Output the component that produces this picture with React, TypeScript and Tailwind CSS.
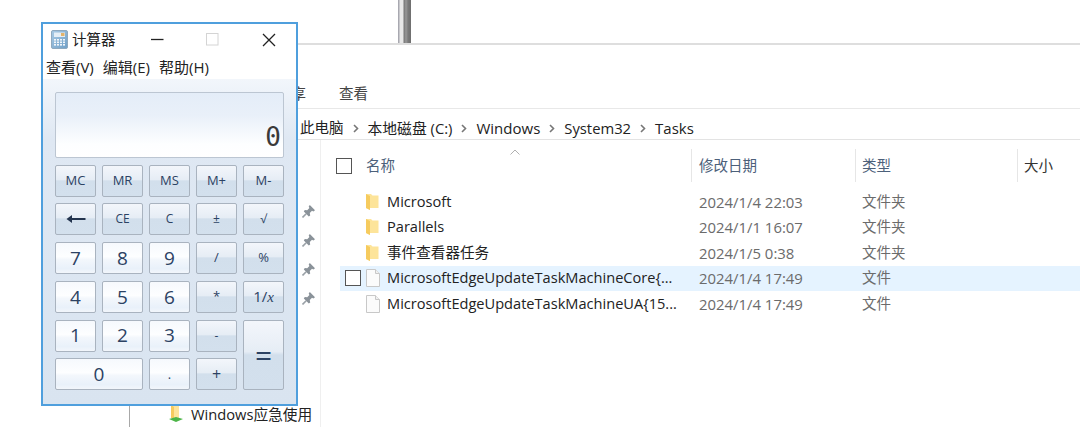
const fnBtn =
  "bg-[linear-gradient(180deg,#f3f6fb_0%,#e6edf5_45%,#d2dfec_50%,#d3e0ed_100%)]";
const numBtn =
  "bg-[linear-gradient(180deg,#f6f9fd_0%,#fdfeff_45%,#f3f7fc_55%,#e9f1fa_85%,#f2f6fb_100%)]";

type Key = { label: React.ReactNode; kind: "fn" | "num"; size: string };

function ArrowGlyph() {
  return (
    <svg width="20" height="10" viewBox="0 0 20 10">
      <path d="M0.5 5 L6 1 V4 H19.5 V6 H6 V9 Z" fill="#23344e" />
    </svg>
  );
}

const keys: Key[] = [
  { label: "MC", kind: "fn", size: "text-[13px]" },
  { label: "MR", kind: "fn", size: "text-[13px]" },
  { label: "MS", kind: "fn", size: "text-[13px]" },
  { label: "M+", kind: "fn", size: "text-[13px]" },
  { label: "M-", kind: "fn", size: "text-[13px]" },
  { label: <ArrowGlyph />, kind: "fn", size: "text-[13px]" },
  { label: "CE", kind: "fn", size: "text-[12px]" },
  { label: "C", kind: "fn", size: "text-[12px]" },
  { label: "±", kind: "fn", size: "text-[12px]" },
  { label: "√", kind: "fn", size: "text-[12px]" },
  { label: "7", kind: "num", size: "text-[19px]" },
  { label: "8", kind: "num", size: "text-[19px]" },
  { label: "9", kind: "num", size: "text-[19px]" },
  { label: "/", kind: "fn", size: "text-[13px]" },
  { label: "%", kind: "fn", size: "text-[13px]" },
  { label: "4", kind: "num", size: "text-[19px]" },
  { label: "5", kind: "num", size: "text-[19px]" },
  { label: "6", kind: "num", size: "text-[19px]" },
  { label: "*", kind: "fn", size: "text-[13px]" },
  {
    label: (
      <span>
        1/<i className="font-['Liberation_Serif',serif]">x</i>
      </span>
    ),
    kind: "fn",
    size: "text-[15px]",
  },
  { label: "1", kind: "num", size: "text-[19px]" },
  { label: "2", kind: "num", size: "text-[19px]" },
  { label: "3", kind: "num", size: "text-[19px]" },
  { label: "-", kind: "fn", size: "text-[12px]" },
  { label: "=", kind: "fn", size: "text-[30px] row-span-2" },
  { label: "0", kind: "num", size: "text-[19px] col-span-2" },
  { label: ".", kind: "num", size: "text-[13px]" },
  { label: "+", kind: "fn", size: "text-[16px]" },
];

function CalcIcon() {
  return (
    <svg width="17" height="19" viewBox="0 0 17 19">
      <defs>
        <linearGradient id="calcBody" x1="0" y1="0" x2="1" y2="1">
          <stop offset="0" stopColor="#a9cbe6" />
          <stop offset="1" stopColor="#6f9fc6" />
        </linearGradient>
      </defs>
      <rect x="0.5" y="0.5" width="16" height="18" rx="1.5" fill="url(#calcBody)" stroke="#8fa9bf" />
      <rect x="3" y="2.5" width="11" height="4.5" fill="#e4eef6" />
      <rect x="10" y="3" width="3.5" height="3" fill="#e2b36b" />
      {[9, 11.5, 14].map((y) =>
        [3, 6, 9, 12].map((x) => (
          <rect key={`${x}-${y}`} x={x} y={y} width="2" height="1.6" fill="#f2f6fa" />
        ))
      )}
    </svg>
  );
}

function Calculator() {
  return (
    <div className="absolute left-[41px] top-[22px] flex h-[384px] w-[257px] flex-col border-2 border-[#4f9fdd] bg-white">
      {/* title bar */}
      <div className="flex h-[32px] shrink-0 items-center pb-[1px] text-[#222]">
        <div className="ml-[8px] mr-[4px]">
          <CalcIcon />
        </div>
        <span className="text-[14.5px]">计算器</span>
        <svg className="ml-[35px]" width="13" height="13" viewBox="0 0 13 13">
          <path d="M0 6.5 H12.5" stroke="#222" strokeWidth="1.3" />
        </svg>
        <svg className="ml-[42px]" width="13" height="13" viewBox="0 0 13 13">
          <rect x="0.5" y="0.5" width="11.5" height="11.5" fill="none" stroke="#d4d4d4" />
        </svg>
        <svg className="ml-[43px]" width="14" height="14" viewBox="0 0 14 14">
          <path d="M1 1 L13 13 M13 1 L1 13" stroke="#222" strokeWidth="1.3" />
        </svg>
      </div>

      {/* menu bar */}
      <div className="flex h-[23px] shrink-0 items-center gap-x-[9px] pl-[3px] text-[15px] text-[#222]">
        <span>查看(V)</span>
        <span>编辑(E)</span>
        <span>帮助(H)</span>
      </div>

      {/* calculator body */}
      <div className="flex-1 bg-[linear-gradient(180deg,#f2f6fb_0px,#dfe8f3_60px,#d9e4f0_100%)] px-[12px] pt-[13px]">
        <div className="flex h-[66px] items-end justify-end rounded-[2px] border border-[#bcc6d2] bg-[linear-gradient(180deg,#e4edf8_0%,#e9f0f9_35%,#fdfeff_80%,#ffffff_100%)] pb-[4px] pr-[2px]">
          <span className="font-['DejaVu_Sans_Mono',monospace] text-[26px] leading-[32px] text-[#3a3a3a]">0</span>
        </div>
        <div className="mt-[6.5px] grid grid-cols-[repeat(5,41px)] grid-rows-[repeat(6,32px)] gap-x-[6px] gap-y-[6.75px]">
          {keys.map((k, i) => (
            <div
              key={i}
              className={`flex items-center justify-center rounded-[2px] border border-[#a9b3bf] text-[#2c4263] ${
                k.kind === "fn" ? fnBtn : numBtn
              } ${k.size}`}
            >
              {k.label}
            </div>
          ))}
        </div>
      </div>
    </div>
  );
}

function FolderIcon() {
  return (
    <svg width="13" height="18" viewBox="0 0 13 18">
      <path d="M0 1 H5 L6.5 2.5 H12.5 V15 H4 V17 L0 15 Z" fill="#fde49a" />
      <path d="M0 1 L4 3 V17 L0 15 Z" fill="#f6cb5e" />
    </svg>
  );
}

function FileIcon() {
  return (
    <svg width="14" height="18" viewBox="0 0 14 18">
      <path d="M0.5 0.5 H9.5 L13.5 4.5 V17.5 H0.5 Z" fill="#fbfbfb" stroke="#c8c8c8" />
      <path d="M9.5 0.5 V4.5 H13.5" fill="#f0f0f0" stroke="#c8c8c8" />
    </svg>
  );
}

function PinIcon() {
  return (
    <svg width="13" height="13" viewBox="0 0 13 13">
      <path d="M7.8 0 L13 5.2 L11.4 6.4 L10 5.8 L7.8 8 L8.2 10.4 L6.8 11.4 L1.8 6.4 L2.8 5 L5.2 5.3 L7.4 3.1 L6.7 1.6 Z" fill="#8a9299" />
      <path d="M4.2 8.8 L0.5 12.5" stroke="#9aa1a7" strokeWidth="1.6" />
    </svg>
  );
}

function Checkbox() {
  return <div className="h-[16px] w-[16px] shrink-0 border-[1.5px] border-[#555] bg-white" />;
}

const rows = [
  { name: "Microsoft", date: "2024/1/4 22:03", type: "文件夹", icon: "folder" },
  { name: "Parallels", date: "2024/1/1 16:07", type: "文件夹", icon: "folder" },
  { name: "事件查看器任务", date: "2024/1/5 0:38", type: "文件夹", icon: "folder" },
  { name: "MicrosoftEdgeUpdateTaskMachineCore{...", date: "2024/1/4 17:49", type: "文件", icon: "file", hover: true },
  { name: "MicrosoftEdgeUpdateTaskMachineUA{15...", date: "2024/1/4 17:49", type: "文件", icon: "file" },
];

const crumbs = [
  { text: "此电脑", size: "text-[14.5px]" },
  { text: "本地磁盘 (C:)", size: "text-[14.8px]" },
  { text: "Windows", size: "text-[15px]" },
  { text: "System32", size: "text-[14.8px]" },
  { text: "Tasks", size: "text-[15px]" },
];

function FileList() {
  return (
    <div className="min-w-0 flex-1 border-l border-[#efefef]">
      {/* column headers */}
      <div className="relative flex h-[49px] pt-[9px] text-[14.5px] text-[#4c607a]">
        <svg className="absolute left-[189px] top-[9px]" width="10" height="6" viewBox="0 0 10 6">
          <path d="M0.5 5.5 L5 1 L9.5 5.5" fill="none" stroke="#b0b0b0" />
        </svg>
        <div className="flex h-[33px] w-[370px] shrink-0 items-center pl-[15px]">
          <Checkbox />
          <span className="ml-[14px]">名称</span>
        </div>
        <div className="flex h-[33px] w-[164px] shrink-0 items-center border-l border-[#e6e6e6] pl-[7px]">修改日期</div>
        <div className="flex h-[33px] w-[162px] shrink-0 items-center border-l border-[#e6e6e6] pl-[6px]">类型</div>
        <div className="flex h-[33px] flex-1 items-center border-l border-[#e6e6e6] pl-[6px] text-[#333]">大小</div>
      </div>

      {/* rows */}
      <div className="pl-[19px]">
        {rows.map((r) => (
          <div key={r.name} className={`flex h-[25.5px] items-center ${r.hover ? "bg-[#e5f3ff]" : ""}`}>
            <div className="flex w-[26px] shrink-0 justify-center">{r.hover && <Checkbox />}</div>
            <div className="flex w-[21px] shrink-0 justify-start">
              {r.icon === "folder" ? <FolderIcon /> : <FileIcon />}
            </div>
            <span className="w-[312px] shrink-0 truncate text-[14.6px] text-[#222]">{r.name}</span>
            <span className="w-[163px] shrink-0 text-[14.9px] text-[#6b6b6b]">{r.date}</span>
            <span className="text-[14.5px] text-[#6b6b6b]">{r.type}</span>
          </div>
        ))}
      </div>
    </div>
  );
}

export default function App() {
  return (
    <div className="relative h-[427px] w-[1080px] overflow-hidden bg-white font-['Open_Sans','Noto_Sans_CJK_SC',sans-serif]">
      {/* window sliver behind the explorer */}
      <div className="flex h-[43px] pl-[398px]">
        <div className="h-full w-[13px] bg-[linear-gradient(90deg,#a8a8b0_0px,#a8a8b0_1px,#e8e8e8_2px,#e8e8e8_5px,#777_6px,#999_8px,#7a7a7a_10px,#6e6e6e_13px)]" />
      </div>

      {/* explorer */}
      <div className="ml-[129px] flex h-[384px] flex-col border-l border-[#a8a8a8]">
        <div className="flex h-[66px] shrink-0 items-end gap-x-[33px] border-b border-t-2 border-b-[#e8e8e8] border-t-[#dedede] pb-[3px] pl-[147px] text-[14.5px] text-[#444]">
          <span>共享</span>
          <span>查看</span>
        </div>
        <div className="flex h-[31px] shrink-0 items-center border-b border-[#e3e3e3] pl-[170px] pt-[8px] text-[#222]">
          {crumbs.map((c, i) => (
            <span key={c.text} className="flex items-center">
              {i > 0 && (
                <svg className="mx-[9px]" width="6" height="9" viewBox="0 0 6 9">
                  <path d="M1 1 L4.5 4.5 L1 8" fill="none" stroke="#777" strokeWidth="1.6" />
                </svg>
              )}
              <span className={c.size}>{c.text}</span>
            </span>
          ))}
        </div>
        <div className="flex min-h-0 flex-1">
          <div className="flex w-[190px] shrink-0 flex-col items-end">
            <div className="flex flex-col gap-y-[16px] pr-[5px] pt-[65px]">
              <PinIcon />
              <PinIcon />
              <PinIcon />
              <PinIcon />
            </div>
            <div className="mt-[98px] flex w-full items-center pl-[38px] text-[14.7px] text-[#222]">
              <svg width="17" height="18" viewBox="0 0 17 18" className="mr-[6px]">
                <path d="M3 0 H11 V13 H3 Z" fill="#fde49a" />
                <path d="M3 0 L6 2 V13 H3 Z" fill="#f6cb5e" />
                <path d="M1 14 L8 12 L15 14 L8 17 Z" fill="#4cb548" />
              </svg>
              <span className="whitespace-nowrap">Windows应急使用</span>
            </div>
          </div>
          <FileList />
        </div>
      </div>

      <Calculator />
    </div>
  );
}
